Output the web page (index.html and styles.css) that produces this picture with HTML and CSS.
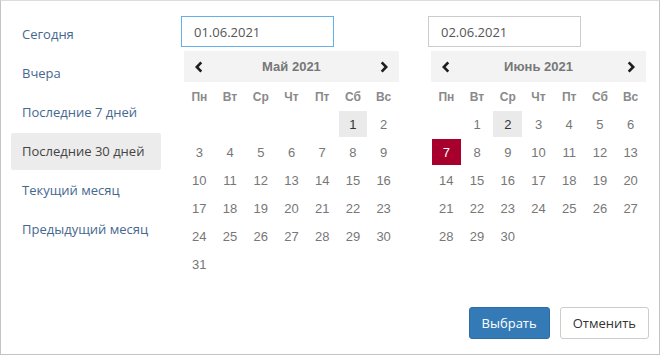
FILE: index.html
```html
<!DOCTYPE html>
<html lang="ru">
<head>
    <meta charset="UTF-8">
    <title>Выбор периода</title>
    <link rel="stylesheet" href="styles.css">
</head>
<body>
    <div class="picker">
        <div class="picker-main">
            <ul class="ranges">
                <li>Сегодня</li>
                <li>Вчера</li>
                <li>Последние 7 дней</li>
                <li class="active">Последние 30 дней</li>
                <li>Текущий месяц</li>
                <li>Предыдущий месяц</li>
            </ul>

            <div class="calendar">
                <input class="date-input focus" type="text" value="01.06.2021">
                <div class="cal-head">
                    <span class="nav"><svg width="8" height="12" viewBox="0 0 8 12"><path d="M6.3 1.3 L1.8 6 L6.3 10.7" /></svg></span>
                    <span class="title">Май 2021</span>
                    <span class="nav"><svg width="8" height="12" viewBox="0 0 8 12"><path d="M1.7 1.3 L6.2 6 L1.7 10.7" /></svg></span>
                </div>
                <div class="days">
                    <span class="wd">Пн</span><span class="wd">Вт</span><span class="wd">Ср</span><span class="wd">Чт</span><span class="wd">Пт</span><span class="wd">Сб</span><span class="wd">Вс</span>
                    <span></span><span></span><span></span><span></span><span></span>
                    <span class="hl">1</span><span>2</span>
                    <span>3</span><span>4</span><span>5</span><span>6</span><span>7</span><span>8</span><span>9</span>
                    <span>10</span><span>11</span><span>12</span><span>13</span><span>14</span><span>15</span><span>16</span>
                    <span>17</span><span>18</span><span>19</span><span>20</span><span>21</span><span>22</span><span>23</span>
                    <span>24</span><span>25</span><span>26</span><span>27</span><span>28</span><span>29</span><span>30</span>
                    <span>31</span>
                </div>
            </div>

            <div class="calendar">
                <input class="date-input" type="text" value="02.06.2021">
                <div class="cal-head">
                    <span class="nav"><svg width="8" height="12" viewBox="0 0 8 12"><path d="M6.3 1.3 L1.8 6 L6.3 10.7" /></svg></span>
                    <span class="title">Июнь 2021</span>
                    <span class="nav"><svg width="8" height="12" viewBox="0 0 8 12"><path d="M1.7 1.3 L6.2 6 L1.7 10.7" /></svg></span>
                </div>
                <div class="days">
                    <span class="wd">Пн</span><span class="wd">Вт</span><span class="wd">Ср</span><span class="wd">Чт</span><span class="wd">Пт</span><span class="wd">Сб</span><span class="wd">Вс</span>
                    <span></span>
                    <span>1</span><span class="hl">2</span><span>3</span><span>4</span><span>5</span><span>6</span>
                    <span class="selected">7</span><span>8</span><span>9</span><span>10</span><span>11</span><span>12</span><span>13</span>
                    <span>14</span><span>15</span><span>16</span><span>17</span><span>18</span><span>19</span><span>20</span>
                    <span>21</span><span>22</span><span>23</span><span>24</span><span>25</span><span>26</span><span>27</span>
                    <span>28</span><span>29</span><span>30</span>
                </div>
            </div>
        </div>

        <div class="actions">
            <button class="btn btn-primary">Выбрать</button>
            <button class="btn">Отменить</button>
        </div>
    </div>
</body>
</html>
```

FILE: styles.css
```css
body {
    margin: 0;
    padding: 0;
    font-family: "Open Sans", Arial, sans-serif;
    background-color: #fff;
}

.picker {
    box-sizing: border-box;
    width: 660px;
    height: 355px;
    padding: 15px 10px 15px 10px;
    border: 1px solid #c4c4c4;
    border-top-color: #dcdcdc;
    display: flex;
    flex-direction: column;
}

.picker-main {
    display: flex;
    align-items: flex-start;
}

/* left list of ranges */
.ranges {
    flex: none;
    list-style: none;
    margin: 0 20px 0 0;
    padding: 0;
    width: 150px;
}

.ranges li {
    height: 37px;
    line-height: 37px;
    margin-bottom: 2px;
    padding-left: 11px;
    font-size: 13px;
    color: #45688f;
    white-space: nowrap;
    border-radius: 2px;
    cursor: pointer;
}

.ranges li.active {
    background-color: #ececec;
    color: #444;
}

/* calendars */
.calendar {
    flex: none;
    width: 218px;
    margin-right: 29px;
}

.date-input {
    box-sizing: border-box;
    display: block;
    width: 153px;
    height: 31px;
    margin: 0 0 4px 0;
    padding: 0 12px;
    border: 1px solid #ccc;
    font-family: "Open Sans", Arial, sans-serif;
    font-size: 13px;
    color: #555;
    outline: none;
}

.date-input.focus {
    border-color: #66afe9;
}

.cal-head,
.days {
    margin-left: 3px;
    width: 215px;
    display: grid;
    grid-template-columns: repeat(7, 1fr);
}

.cal-head {
    height: 31px;
    align-items: center;
    background-color: #f3f3f3;
    font-family: "Liberation Sans", Arial, sans-serif;
}

.cal-head .nav {
    display: flex;
    justify-content: center;
    align-items: center;
}

.cal-head .nav path {
    fill: none;
    stroke: #1e1e1e;
    stroke-width: 2.6;
}

.cal-head .title {
    grid-column: span 5;
    text-align: center;
    font-size: 13px;
    font-weight: bold;
    color: #777;
}

.days {
    grid-auto-rows: 28px;
    font-family: "Liberation Sans", Arial, sans-serif;
    font-size: 13px;
    color: #777;
}

.days span {
    margin: 1px;
    display: flex;
    align-items: center;
    justify-content: center;
}

.days .wd {
    height: 30px;
    margin: 0;
    font-size: 12px;
    font-weight: bold;
    color: #8a8a8a;
}

.days .hl {
    background-color: #eaeaea;
    color: #333;
}

.days .selected {
    background-color: #a8002c;
    color: #fff;
}

/* bottom buttons */
.actions {
    margin-top: auto;
    display: flex;
    justify-content: flex-end;
    gap: 10px;
}

.btn {
    height: 32px;
    padding: 0 12px;
    border: 1px solid #ccc;
    border-radius: 3px;
    background-color: #fff;
    font-family: "Open Sans", Arial, sans-serif;
    font-size: 13px;
    color: #333;
    cursor: pointer;
}

.btn-primary {
    background-color: #337ab7;
    border-color: #2e6da4;
    color: #fff;
}
```
